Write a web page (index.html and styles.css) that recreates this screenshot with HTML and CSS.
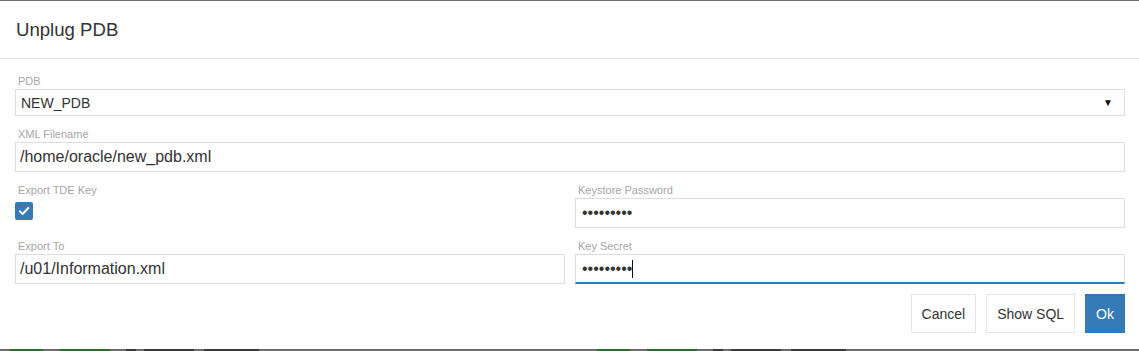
FILE: index.html
```html
<!DOCTYPE html>
<html lang="en">
<head>
<meta charset="UTF-8">
<meta name="viewport" content="width=device-width, initial-scale=1.0">
<title>Unplug PDB</title>
<link rel="stylesheet" href="styles.css">
</head>
<body>
<div class="modal">
 <div class="modal-header">
  <h4 class="modal-title">Unplug PDB</h4>
 </div>
 <form class="modal-body">
  <div class="field wide">
   <label class="field-label">PDB</label>
   <div class="select-wrap">
    <select class="select">
     <option>NEW_PDB</option>
    </select>
    <span class="caret">&#9660;</span>
   </div>
  </div>
  <div class="field wide">
   <label class="field-label">XML Filename</label>
   <input class="text-input" type="text" value="/home/oracle/new_pdb.xml">
  </div>
  <div class="field">
   <label class="field-label">Export TDE Key</label>
   <span class="checkbox checked">
    <svg width="12" height="12" viewBox="0 0 12 12"><path d="M1.8 6.3 L4.6 9 L10.3 3" fill="none" stroke="#fff" stroke-width="1.9" stroke-linecap="round" stroke-linejoin="round"/></svg>
   </span>
  </div>
  <div class="field">
   <label class="field-label">Keystore Password</label>
   <input class="text-input pw" type="password" value="secret123">
  </div>
  <div class="field">
   <label class="field-label">Export To</label>
   <input class="text-input" type="text" value="/u01/Information.xml">
  </div>
  <div class="field">
   <label class="field-label">Key Secret</label>
   <div class="input-wrap">
    <input class="text-input pw focused" type="password" value="secret123">
    <span class="text-caret"></span>
   </div>
  </div>
 </form>
 <div class="modal-footer">
  <button class="btn">Cancel</button>
  <button class="btn">Show SQL</button>
  <button class="btn btn-primary">Ok</button>
 </div>
</div>
<div class="backdrop-strip">
 <span class="seg gray" style="width:10px"></span>
 <span class="seg green" style="width:33px"></span>
 <span class="seg gray" style="width:17px"></span>
 <span class="seg green" style="width:50px"></span>
 <span class="seg gray" style="width:16px"></span>
 <span class="seg dark" style="width:10px"></span>
 <span class="seg gray" style="width:8px"></span>
 <span class="seg dark" style="width:50px"></span>
 <span class="seg gray" style="width:10px"></span>
 <span class="seg dark" style="width:55px"></span>
 <span class="seg gray" style="width:338px"></span>
 <span class="seg green" style="width:33px"></span>
 <span class="seg gray" style="width:17px"></span>
 <span class="seg green" style="width:50px"></span>
 <span class="seg gray" style="width:16px"></span>
 <span class="seg dark" style="width:10px"></span>
 <span class="seg gray" style="width:8px"></span>
 <span class="seg dark" style="width:50px"></span>
 <span class="seg gray" style="width:10px"></span>
 <span class="seg dark" style="width:55px"></span>
</div>
</body>
</html>
```

FILE: styles.css
```css
html,body{margin:0;padding:0}
body{font-family:"Liberation Sans",Arial,Helvetica,sans-serif;color:#333;background:#6e6e6e;width:1139px;height:351px;overflow:hidden}
.modal{margin-top:1px;height:348px;background:#fff;box-sizing:border-box}
.modal-header{border-bottom:1px solid #e5e5e5;padding:19px 16px 0;box-sizing:content-box;height:38px}
.modal-title{margin:0;font-size:18.6px;line-height:20px;font-weight:normal;color:#333}
.modal-body{display:grid;grid-template-columns:550px 550px;column-gap:10px;row-gap:11px;padding:15px 14px 0 15px;margin:0}
.field{display:flex;flex-direction:column;align-items:flex-start}
.field.wide{grid-column:1 / 3}
.field-label{display:block;font-size:11px;line-height:15px;color:#a6a6a6;padding-left:3px}
.select-wrap,.input-wrap{position:relative;width:100%}
.select{display:block;width:100%;height:27px;margin:0;padding:0 0 0 5px;border:1px solid #ddd;border-radius:0;background:#fff;font-family:inherit;font-size:14px;color:#333;appearance:none;-webkit-appearance:none;outline:none}
.caret{position:absolute;right:12px;top:9px;font-size:10px;line-height:10px;color:#111;pointer-events:none}
.text-input{display:block;width:100%;height:30px;margin:0;padding:0 5px 0 4px;box-sizing:border-box;border:1px solid #ddd;border-radius:0;font-family:inherit;font-size:16px;color:#333;outline:none;background:#fff}
.text-input.pw{font-size:16px;padding-left:6px}
.text-input.focused{border-bottom:2px solid #337ab7}
.text-caret{position:absolute;left:57px;top:6px;width:1px;height:18px;background:#111}
.checkbox{display:flex;align-items:center;justify-content:center;width:18px;height:18px;margin-top:4px;border-radius:2px;background:#337ab7}
.modal-footer{display:flex;justify-content:flex-end;gap:10px;padding:10px 14px 0 15px}
.btn{height:39px;padding:0 10px;border:1px solid #e6e6e6;background:#fff;color:#333;font-family:inherit;font-size:14px;border-radius:0;cursor:pointer}
.btn-primary{background:#337ab7;border-color:#337ab7;color:#fff;padding:0 10px}
.backdrop-strip{display:flex;height:2px}
.seg{display:block;height:2px;flex:none}
.seg.gray{background:#6e6e6e}
.seg.green{background:#2f6a2f}
.seg.dark{background:#3a3a3a}
```
